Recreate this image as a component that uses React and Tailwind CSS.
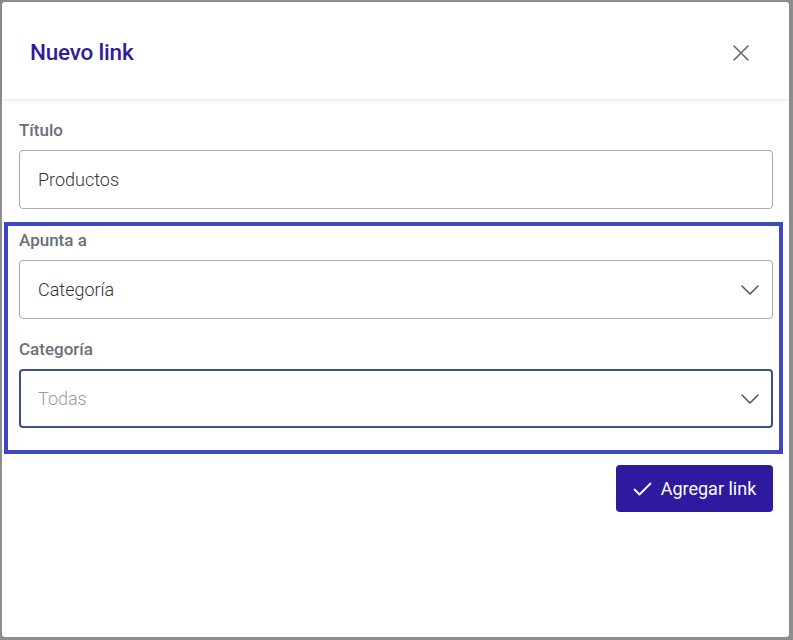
import React, { useState } from "react";

const Chevron = () => (
  <svg width="18" height="10" viewBox="0 0 18 10" fill="none" className="shrink-0">
    <path d="M1 1l8 8 8-8" stroke="#555" strokeWidth="1.6" strokeLinecap="round" strokeLinejoin="round" />
  </svg>
);

const Label = ({ children }) => (
  <label className="block text-[17px] leading-6 font-medium text-[#6b7079] mb-2">{children}</label>
);

const App = () => {
  const [titulo, setTitulo] = useState("Productos");

  return (
    <div
      className="w-[793px] h-[640px] bg-[#8d8d8d] pt-[2px] pl-[2px] pr-[4px] pb-[3px]"
      style={{ fontFamily: "Roboto, 'Liberation Sans', sans-serif" }}
    >
      <div className="h-full bg-white rounded-[3px] flex flex-col">
        {/* Header */}
        <div className="h-[98px] flex items-center justify-between pl-[28px] pr-[40px] pt-[4px] shadow-[0_2px_4px_rgba(0,0,0,0.06)] border-b border-[#f0f0f0]">
          <h1 className="text-[22.5px] font-medium text-[#2f1d99] tracking-[-0.2px]">Nuevo link</h1>
          <button className="text-[#666]">
            <svg width="16" height="16" viewBox="0 0 16 16" fill="none">
              <path d="M1 1l14 14M15 1L1 15" stroke="#666" strokeWidth="1.6" strokeLinecap="round" />
            </svg>
          </button>
        </div>

        {/* Body */}
        <div className="pl-[17px] pr-[16px] pt-[18px]">
          <Label>Título</Label>
          <input
            className="w-full h-[59px] border border-[#a9a9a9] rounded-[4px] px-[18px] text-[18px] font-light text-[#333] outline-none"
            value={titulo}
            onChange={(e) => setTitulo(e.target.value)}
          />

          <div className="mt-[13px] -ml-[15px] -mr-[10px] border-4 border-[#3f48c4] pl-[11px] pr-[6px] pt-[2px] pb-[22px]">
            <Label>Apunta a</Label>
            <div className="h-[59px] border border-[#a9a9a9] rounded-[4px] pl-[18px] pr-[13px] flex items-center justify-between">
              <span className="text-[18px] font-light text-[#333]">Categoría</span>
              <Chevron />
            </div>

            <div className="mt-[18px]">
              <Label>Categoría</Label>
              <div className="h-[59px] border-2 border-[#3d4d91] rounded-[4px] pl-[17px] pr-[12px] flex items-center justify-between">
                <span className="text-[18px] font-light text-[#9a9a9a]">Todas</span>
                <Chevron />
              </div>
            </div>
          </div>

          <div className="flex justify-end mt-[11px]">
            <button className="h-[47px] w-[157px] bg-[#2f1a9f] rounded-[4px] text-white flex items-center justify-center gap-[9px] text-[18px]">
              <svg width="19" height="14" viewBox="0 0 19 14" fill="none">
                <path d="M1.5 7.5l5 5L17.5 1.5" stroke="white" strokeWidth="1.8" strokeLinecap="round" strokeLinejoin="round" />
              </svg>
              Agregar link
            </button>
          </div>
        </div>
      </div>
    </div>
  );
};

export default App;
